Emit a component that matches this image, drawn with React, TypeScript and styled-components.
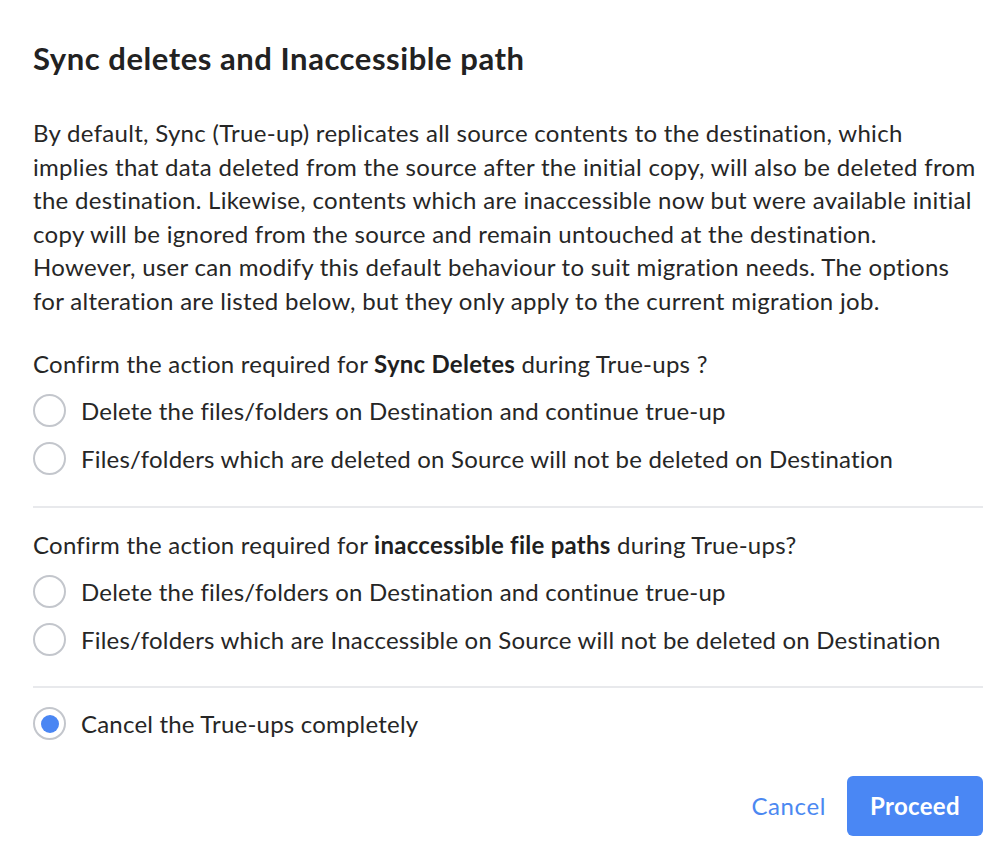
import React, { useState } from "react";
import styled, { createGlobalStyle } from "styled-components";

const Global = createGlobalStyle`
  html, body { margin: 0; padding: 0; background: #ffffff; }
  body { font-family: Lato, "Open Sans", sans-serif; color: #262626; }
  * { box-sizing: border-box; }
`;

const Dialog = styled.div`
  width: 999px;
  padding: 39px 16px 0 33px;
  display: flex;
  flex-direction: column;
`;

const Title = styled.h1`
  margin: 0;
  font-size: 31px;
  line-height: 38px;
  font-weight: 700;
  letter-spacing: 0.55px;
  color: #222222;
`;

const Description = styled.p`
  margin: 39px 0 0 0;
  font-size: 24px;
  line-height: 33.6px;
  letter-spacing: 0.3px;
  color: #262626;
`;

const Question = styled.div<{ $top: number }>`
  margin-top: ${(p) => p.$top}px;
  font-size: 24px;
  line-height: 33.6px;
  letter-spacing: 0.25px;
  color: #262626;
  b { font-weight: 700; color: #1f1f1f; }
`;

const Options = styled.div<{ $top: number }>`
  margin-top: ${(p) => p.$top}px;
  display: flex;
  flex-direction: column;
`;

const OptionRow = styled.label`
  height: 48px;
  display: flex;
  align-items: center;
  gap: 15px;
  font-size: 24px;
  letter-spacing: 0.2px;
  color: #262626;
  cursor: pointer;
`;

const RadioCircle = styled.span<{ $checked: boolean }>`
  width: 33px;
  height: 33px;
  flex: 0 0 33px;
  border-radius: 50%;
  border: 2px solid #c3c6cc;
  display: flex;
  align-items: center;
  justify-content: center;
  background: #fff;
  &::after {
    content: "";
    width: 18px;
    height: 18px;
    border-radius: 50%;
    background: #4a86f3;
    display: ${(p) => (p.$checked ? "block" : "none")};
  }
`;

const Divider = styled.hr<{ $top: number; $bottom: number }>`
  margin: ${(p) => p.$top}px 0 ${(p) => p.$bottom}px 0;
  border: none;
  height: 2px;
  background: #e8e9ec;
`;

const Footer = styled.div`
  margin-top: 28px;
  display: flex;
  justify-content: flex-end;
  align-items: center;
  gap: 21px;
`;

const TextButton = styled.button`
  border: none;
  background: none;
  padding: 0;
  font-family: inherit;
  font-size: 24px;
  letter-spacing: 0.6px;
  color: #4b88f1;
  cursor: pointer;
`;

const PrimaryButton = styled.button`
  width: 136px;
  height: 60px;
  border: none;
  border-radius: 6px;
  background: #4a87f4;
  color: #ffffff;
  font-family: inherit;
  font-size: 24px;
  font-weight: 700;
  letter-spacing: 0.3px;
  cursor: pointer;
`;

type Opt = { id: string; label: string };

const Radio: React.FC<{ opt: Opt; value: string; onChange: (v: string) => void }> = ({ opt, value, onChange }) => (
  <OptionRow onClick={() => onChange(opt.id)}>
    <RadioCircle $checked={value === opt.id} />
    <span>{opt.label}</span>
  </OptionRow>
);

export default function App() {
  const [value, setValue] = useState("cancel");
  return (
    <>
      <Global />
      <Dialog>
        <Title>Sync deletes and Inaccessible path</Title>
        <Description>
          By default, Sync (True-up) replicates all source contents to the destination, which
          <br />
          implies that data deleted from the source after the initial copy, will also be deleted from
          <br />
          the destination. Likewise, contents which are inaccessible now but were available initial
          <br />
          copy will be ignored from the source and remain untouched at the destination.
          <br />
          However, user can modify this default behaviour to suit migration needs. The options
          <br />
          for alteration are listed below, but they only apply to the current migration job.
        </Description>
        <Question $top={29}>
          Confirm the action required for <b>Sync Deletes</b> during True-ups ?
        </Question>
        <Options $top={6}>
          <Radio
            opt={{ id: "d1", label: "Delete the files/folders on Destination and continue true-up" }}
            value={value}
            onChange={setValue}
          />
          <Radio
            opt={{ id: "d2", label: "Files/folders which are deleted on Source will not be deleted on Destination" }}
            value={value}
            onChange={setValue}
          />
        </Options>
        <Divider $top={24} $bottom={20} />
        <Question $top={0}>
          Confirm the action required for <b>inaccessible file paths</b> during True-ups?
        </Question>
        <Options $top={6}>
          <Radio
            opt={{ id: "i1", label: "Delete the files/folders on Destination and continue true-up" }}
            value={value}
            onChange={setValue}
          />
          <Radio
            opt={{ id: "i2", label: "Files/folders which are Inaccessible on Source will not be deleted on Destination" }}
            value={value}
            onChange={setValue}
          />
        </Options>
        <Divider $top={22} $bottom={12} />
        <Options $top={0}>
          <Radio opt={{ id: "cancel", label: "Cancel the True-ups completely" }} value={value} onChange={setValue} />
        </Options>
        <Footer>
          <TextButton>Cancel</TextButton>
          <PrimaryButton>Proceed</PrimaryButton>
        </Footer>
      </Dialog>
    </>
  );
}
